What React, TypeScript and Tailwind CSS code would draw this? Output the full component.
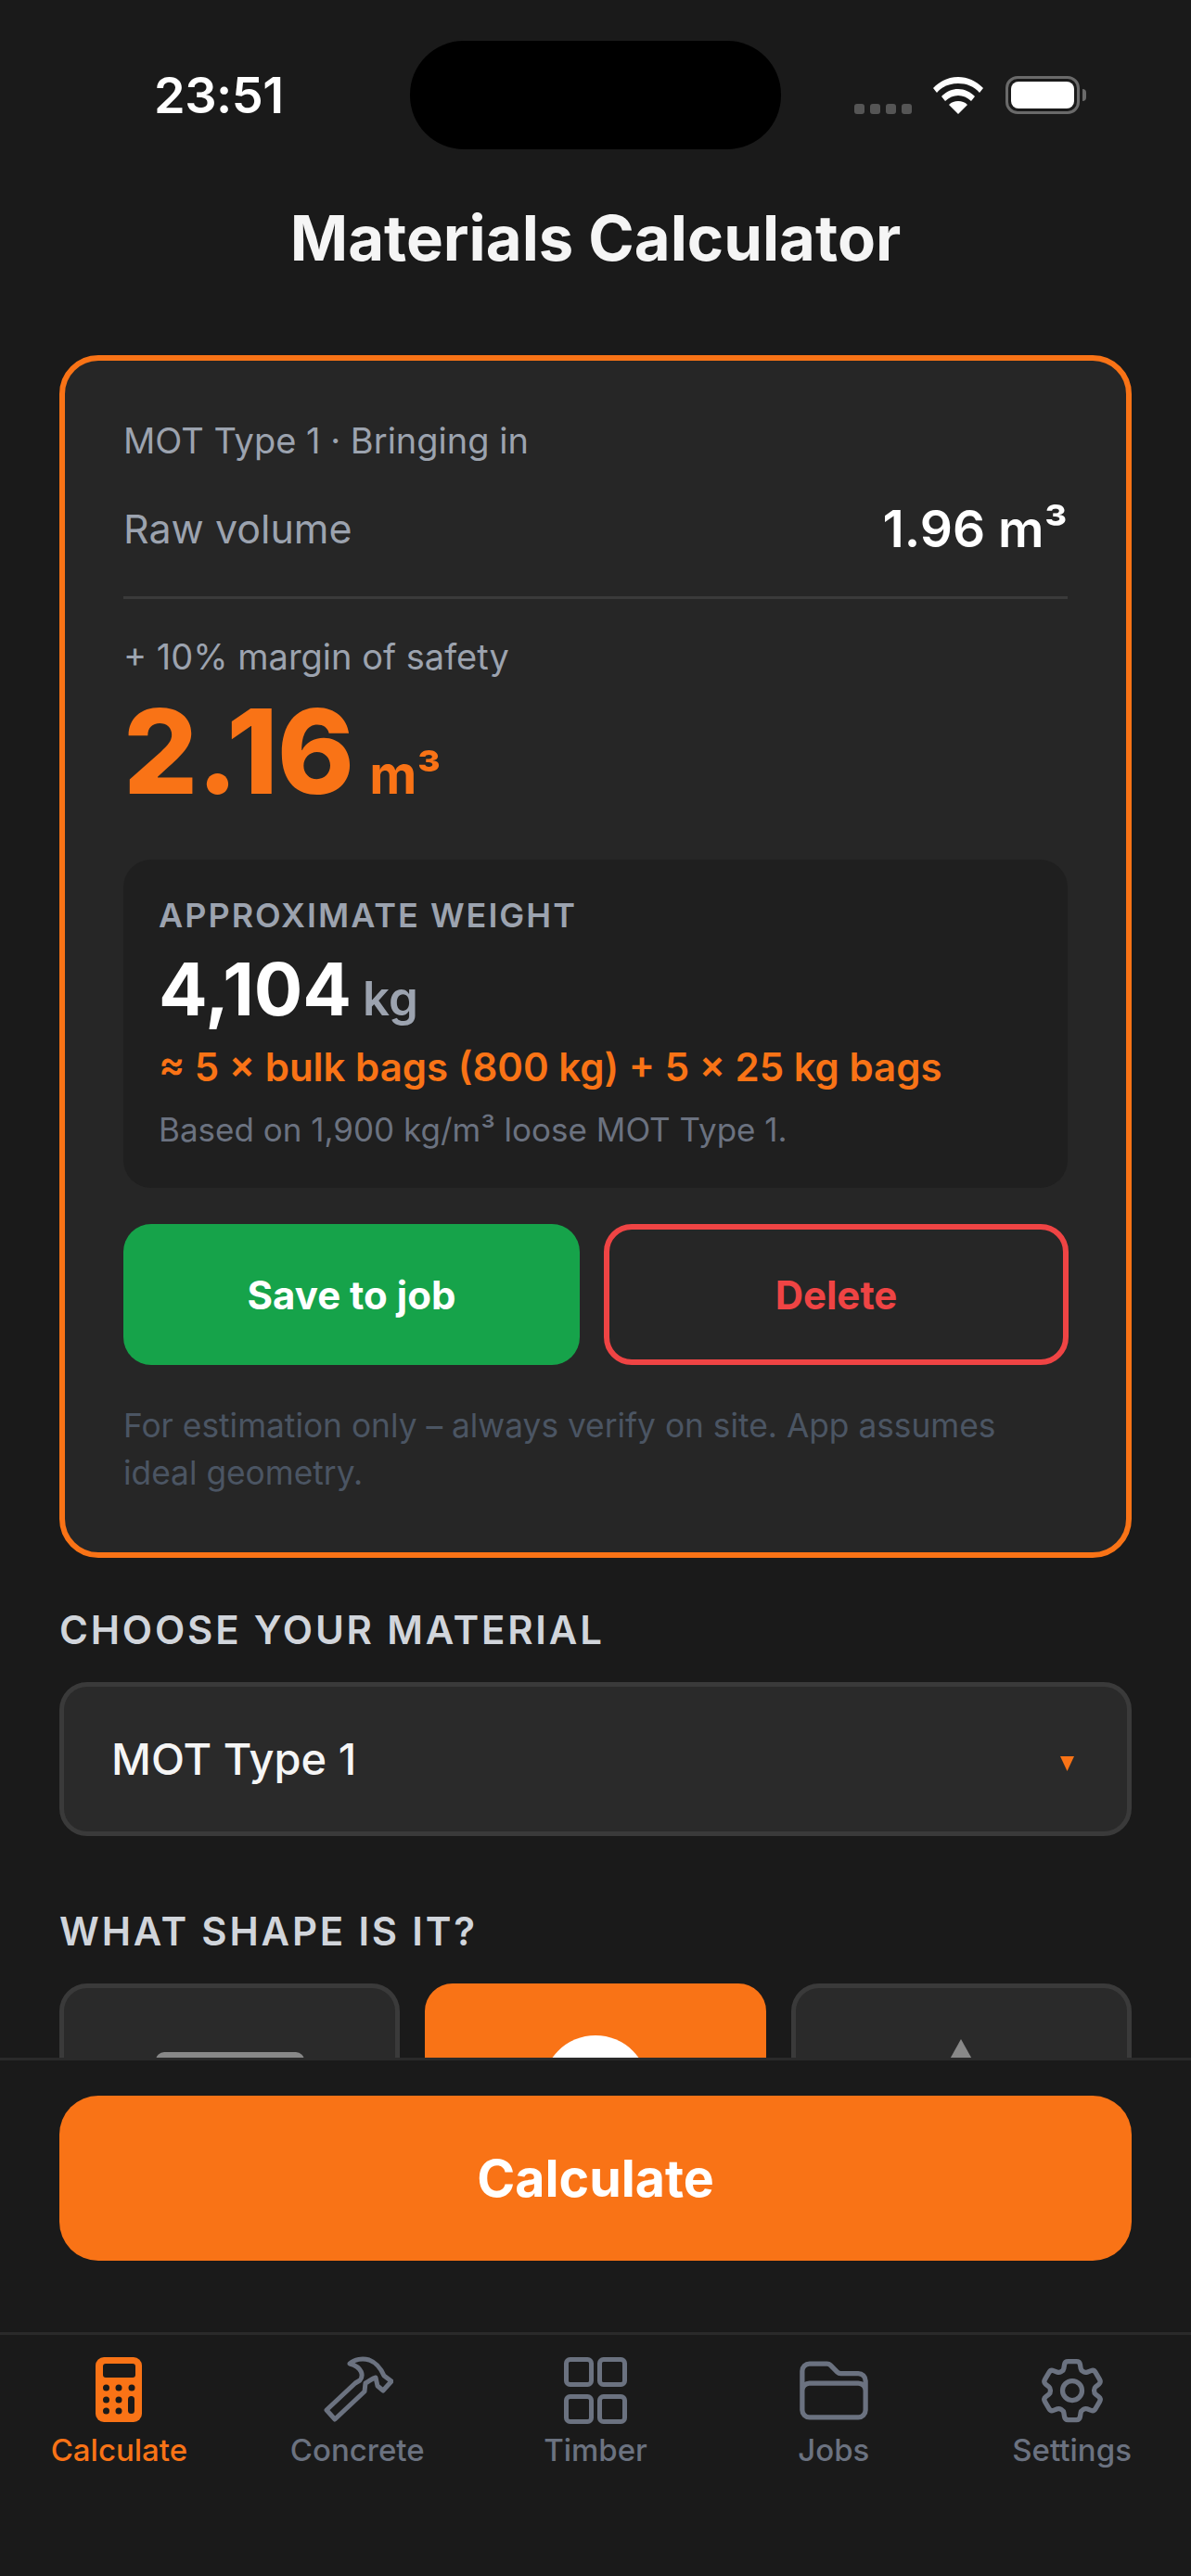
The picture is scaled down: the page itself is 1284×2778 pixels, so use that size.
import type { ReactNode } from 'react';
import { HiOutlineFolder, HiOutlineCog6Tooth } from 'react-icons/hi2';

function CalculatorIcon() {
  return (
    <svg width="78" height="78" viewBox="0 0 78 78" className="shrink-0">
      <g transform="translate(-9,-10)">
        <rect x="23" y="13" width="50" height="70" rx="9" fill="currentColor" />
        <rect x="31" y="20" width="35" height="15" rx="3" fill="#1a1a1a" />
        {[34.5, 48, 62].map(x => <circle key={x} cx={x} cy="46" r="3.5" fill="#1a1a1a" />)}
        {[34.5, 48].map(x => <circle key={x} cx={x} cy="59" r="3.5" fill="#1a1a1a" />)}
        {[34.5, 48].map(x => <circle key={x} cx={x} cy="71" r="3.5" fill="#1a1a1a" />)}
        <rect x="58" y="55" width="7" height="19" rx="3.5" fill="#1a1a1a" />
      </g>
    </svg>
  );
}

function HammerIcon() {
  return (
    <svg width="78" height="78" viewBox="0 0 78 78" fill="none" stroke="currentColor" strokeWidth="5" strokeLinejoin="round" strokeLinecap="round" className="shrink-0">
      <g transform="translate(-24,-10)">
        <path d="M30 70L61 41L66 38C70 33 69 24 55 20C60 15 69 14 76 16C84 19 89 26 92 33L100 39L91 49L85 44L83 35C79 36 76 39 72 41L71 50L39 80Z" />
      </g>
    </svg>
  );
}

function GridIcon() {
  return (
    <svg width="78" height="78" viewBox="0 0 78 78" fill="none" stroke="currentColor" strokeWidth="5" className="shrink-0">
      <rect x="7.5" y="5.5" width="27" height="27" rx="4" />
      <rect x="43.5" y="5.5" width="27" height="27" rx="4" />
      <rect x="7.5" y="45.5" width="27" height="27" rx="4" />
      <rect x="43.5" y="45.5" width="27" height="27" rx="4" />
    </svg>
  );
}

const tabs = [
  { label: 'Calculate', icon: <CalculatorIcon />, active: true },
  { label: 'Concrete', icon: <HammerIcon />, active: false },
  { label: 'Timber', icon: <GridIcon />, active: false },
  { label: 'Jobs', icon: <HiOutlineFolder size={84} className="shrink-0" />, active: false },
  { label: 'Settings', icon: <HiOutlineCog6Tooth size={84} className="shrink-0" />, active: false },
];

function StatusBar() {
  return (
    <div className="relative h-[190px] shrink-0">
      <span className="absolute left-[166px] top-[73px] text-[54px] leading-[60px] font-semibold text-white font-['Inter',sans-serif] tracking-[-0.5px]">23:51</span>
      <div className="absolute left-[442px] top-[44px] w-[400px] h-[117px] rounded-[58px] bg-black" />
      <div className="absolute left-[921px] top-[112px] flex gap-[6px]">
        {[0, 1, 2, 3].map(i => (
          <div key={i} className="w-[11px] h-[11px] rounded-[3px] bg-[#555555]" />
        ))}
      </div>
      <svg className="absolute left-[1006px] top-[83px]" width="54" height="40" viewBox="0 0 54 40">
        <path d="M27 0C17 0 8 4 0 12l4 5C10 10 18 7 27 7s17 3 23 10l4-5C46 4 37 0 27 0z" fill="#fff" />
        <path d="M27 13c-7 0-13 3-18 8l4 5c4-4 9-6 14-6s10 2 14 6l4-5c-5-5-11-8-18-8z" fill="#fff" />
        <path d="M27 26c-4 0-7 1-10 4l10 10 10-10c-3-3-6-4-10-4z" fill="#fff" />
      </svg>
      <div className="absolute left-[1084px] top-[82px] w-[80px] h-[41px] rounded-[13px] border-[3px] border-[#6a6a6a] p-[3px]">
        <div className="w-full h-full rounded-[8px] bg-white" />
      </div>
      <div className="absolute left-[1167px] top-[96px] w-[4px] h-[13px] rounded-r-[4px] bg-[#6a6a6a]" />
    </div>
  );
}

function ShapeTile({ active, children }: { active?: boolean; children: ReactNode }) {
  return (
    <div className={active
      ? 'h-[240px] rounded-[30px] bg-[#f97316] border-[5px] border-[#f97316] flex justify-center pt-[51px]'
      : 'h-[240px] rounded-[30px] bg-[#2a2a2a] border-[5px] border-[#3a3a3a] flex justify-center pt-[51px]'}>
      {children}
    </div>
  );
}

export default function App() {
  return (
    <div className="w-[1284px] h-[2778px] bg-[#1a1a1a] flex flex-col overflow-hidden font-['Inter',sans-serif]">
      <StatusBar />

      <div className="h-[136px] shrink-0 flex justify-center pt-[27px]">
        <h1 className="text-[67px] leading-[80px] font-bold text-[#f5f5f5] font-['Inter',sans-serif]">Materials Calculator</h1>
      </div>

      <div className="flex-1 min-h-0 overflow-hidden px-[64px] pt-[57px]">
        {/* Result card */}
        <div className="bg-[#262626] border-[6px] border-[#f97316] rounded-[42px] px-[63px] pt-[62px] pb-[60px]">
          <p className="text-[38px] leading-[48px] text-[#9ca3af]">MOT Type 1 · Bringing in</p>

          <div className="flex items-center justify-between mt-[41px] pb-[43px] border-b-[3px] border-[#3a3a3a]">
            <span className="text-[43px] leading-[60px] text-[#9ca3af]">Raw volume</span>
            <span className="text-[55px] leading-[60px] font-semibold text-white">1.96 m³</span>
          </div>

          <p className="text-[38px] leading-[48px] text-[#9ca3af] mt-[38px]">+ 10% margin of safety</p>

          <div className="flex items-baseline mt-[8px]">
            <span className="text-[126px] leading-[140px] font-extrabold text-[#f97316] tracking-[-1px]">2.16</span>
            <span className="text-[56px] leading-[60px] font-bold text-[#f97316] ml-[17px]">m³</span>
          </div>

          <div className="bg-[#1f1f1f] rounded-[30px] px-[38px] pt-[38px] pb-[41px] mt-[47px]">
            <p className="text-[36px] leading-[44px] font-semibold text-[#9ca3af] tracking-[2px]">APPROXIMATE WEIGHT</p>
            <div className="flex items-baseline mt-[13px]">
              <span className="text-[78px] leading-[90px] font-bold text-white">4,104</span>
              <span className="text-[51px] leading-[60px] font-semibold text-[#9ca3af] ml-[12px]">kg</span>
            </div>
            <p className="text-[42px] leading-[50px] font-semibold text-[#f97316] mt-[14px]">≈ 5 × bulk bags (800 kg) + 5 × 25 kg bags</p>
            <p className="text-[35px] leading-[44px] text-[#6b7280] mt-[20px]">Based on 1,900 kg/m³ loose MOT Type 1.</p>
          </div>

          <div className="grid grid-cols-[492px_501px] gap-[26px] mt-[39px]">
            <button className="h-[152px] rounded-[30px] bg-[#16a34a] text-white text-[42px] font-bold">Save to job</button>
            <button className="h-[152px] rounded-[30px] border-[6px] border-[#ef4444] text-[#ef4444] text-[42px] font-bold">Delete</button>
          </div>

          <p className="text-[35.3px] leading-[51px] text-[#4b5563] mt-[40px]">For estimation only – always verify on site. App assumes ideal geometry.</p>
        </div>

        <p className="text-[42px] leading-[48px] font-semibold text-[#d1d5db] tracking-[2.8px] mt-[54px]">CHOOSE YOUR MATERIAL</p>

        <div className="h-[166px] mt-[32px] bg-[#2a2a2a] border-[5px] border-[#3a3a3a] rounded-[30px] flex items-center justify-between pl-[51px] pr-[57px]">
          <span className="text-[47px] font-medium text-[#f5f5f5]">MOT Type 1</span>
          <svg width="15" height="16" viewBox="0 0 15 16" className="mt-[10px]">
            <polygon points="0,0 15,0 7.5,16" fill="#f97316" />
          </svg>
        </div>

        <p className="text-[42px] leading-[48px] font-semibold text-[#d1d5db] tracking-[2.8px] mt-[79px]">WHAT SHAPE IS IT?</p>

        <div className="grid grid-cols-3 gap-[27px] mt-[32px]">
          <ShapeTile>
            <div className="w-[160px] h-[100px] mt-[18px] rounded-[9px] bg-[#888888]" />
          </ShapeTile>
          <ShapeTile active>
            <div className="w-[114px] h-[114px] rounded-full bg-white" />
          </ShapeTile>
          <ShapeTile>
            <svg width="100" height="90" viewBox="0 0 100 90" className="mt-[4px]">
              <polygon points="50,0 100,90 0,90" fill="#888888" />
            </svg>
          </ShapeTile>
        </div>
      </div>

      {/* Calculate footer */}
      <div className="h-[296px] shrink-0 border-t-[3px] border-[#2a2a2a] bg-[#1a1a1a] px-[64px] pt-[38px] z-10">
        <button className="w-full h-[178px] rounded-[42px] bg-[#f97316] text-white text-[55.5px] font-bold">Calculate</button>
      </div>

      {/* Tab bar */}
      <div className="h-[263px] shrink-0 border-t-[3px] border-[#2a2a2a] grid grid-cols-5 content-start pt-[21px]">
        {tabs.map(({ label, icon, active }) => (
          <div key={label} className={active ? 'flex flex-col items-center text-[#f97316]' : 'flex flex-col items-center text-[#6b7280]'}>
            <div className="h-[78px] flex items-center justify-center">{icon}</div>
            <span className="text-[33px] leading-[42px] font-medium mt-[4px]">{label}</span>
          </div>
        ))}
      </div>
    </div>
  );
}
